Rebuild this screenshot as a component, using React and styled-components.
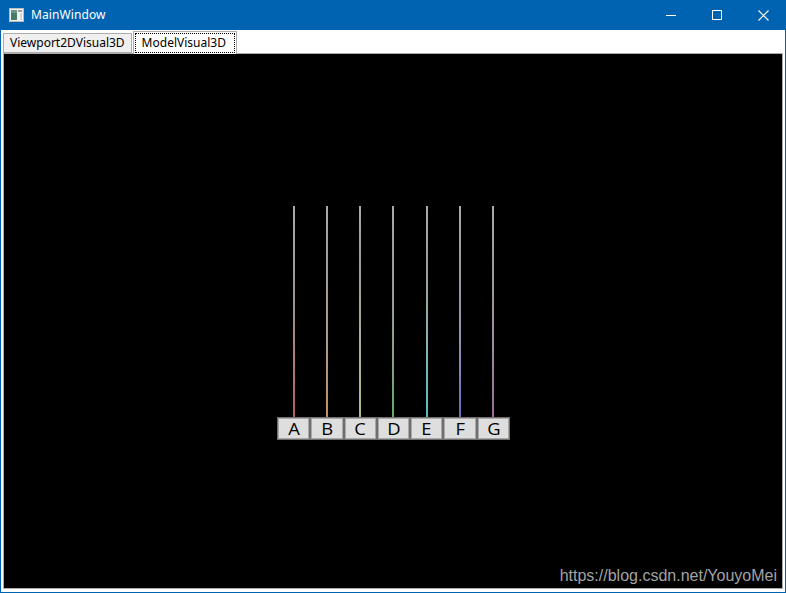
import React from "react";
import styled, { createGlobalStyle } from "styled-components";

const GlobalStyle = createGlobalStyle`
  html, body { margin: 0; padding: 0; background: #ffffff; overflow: hidden; }
  * { box-sizing: border-box; }
`;

const Window = styled.div`
  width: 786px;
  height: 593px;
  display: flex;
  flex-direction: column;
  background: #ffffff;
  border: 1px solid #0063b1;
  border-top: none;
  font-family: "Noto Sans", "Liberation Sans", sans-serif;
`;

const TitleBar = styled.div`
  height: 30px;
  flex: 0 0 30px;
  background: #0063b1;
  display: flex;
  align-items: center;
  color: #ffffff;
  margin: 0 -1px;
`;

const AppIcon = styled.svg`
  width: 15px;
  height: 14px;
  margin-left: 9px;
  margin-right: 7px;
  flex: 0 0 auto;
`;

const Title = styled.div`
  font-size: 12px;
  flex: 1;
  line-height: 30px;
  letter-spacing: 0.1px;
`;

const CaptionButton = styled.div`
  width: 46px;
  height: 30px;
  display: flex;
  align-items: center;
  justify-content: center;
`;

const TabStrip = styled.div`
  height: 23px;
  flex: 0 0 23px;
  display: flex;
  align-items: flex-end;
  padding-left: 2px;
  position: relative;
  z-index: 1;
`;

const Tab = styled.div`
  height: ${(p) => (p.$selected ? "23px" : "20px")};
  margin-bottom: ${(p) => (p.$selected ? "-1px" : "0")};
  margin-left: ${(p) => (p.$selected ? "1px" : "0")};
  padding: ${(p) => (p.$selected ? "1px" : "0")};
  border: 1px solid #acacac;
  border-bottom: ${(p) => (p.$selected ? "none" : "1px solid #acacac")};
  background: ${(p) => (p.$selected ? "#ffffff" : "#f0f0f0")};
  font-size: 12px;
  color: #000000;
  display: flex;
`;

const TabLabel = styled.div`
  display: flex;
  align-items: center;
  padding: ${(p) => (p.$selected ? "0 8px 1px 6px" : "0 5px 1px 5px")};
  border: 1px ${(p) => (p.$selected ? "dotted #000000" : "solid transparent")};
  line-height: 16px;
  white-space: nowrap;
`;

const Panel = styled.div`
  flex: 1;
  margin: 0 2px 3px 2px;
  border: 1px solid #acacac;
  background: #000000;
  position: relative;
  display: flex;
  align-items: center;
  justify-content: center;
  padding-top: 4px;
`;

const Scene = styled.div`
  width: 233px;
  display: flex;
  flex-direction: column;
  margin-left: 1px;
`;

const StringsRow = styled.div`
  height: 211px;
  display: flex;
`;

const StringCell = styled.div`
  flex: 1;
  display: flex;
  justify-content: center;
`;

const Wire = styled.div`
  width: 2px;
  height: 100%;
  opacity: 0.85;
  background: linear-gradient(
    to bottom,
    #c8c8c8 0%,
    #b8b8b8 25%,
    ${(p) => p.$mid} 65%,
    ${(p) => p.$color} 100%
  );
`;

const KeysRow = styled.div`
  height: 23px;
  display: flex;
`;

const Key = styled.div`
  flex: 1;
  background: #dedede;
  border: 1px solid #6f6f6f;
  box-shadow: inset 0 0 0 1px #a8a8a8;
  display: flex;
  align-items: center;
  justify-content: center;
  font-family: "Open Sans", "Noto Sans", sans-serif;
  font-size: 16px;
  color: #000000;
  line-height: 1;
  padding-top: 1px;
`;

const KeyLetter = styled.span`
  display: inline-block;
  transform: scaleX(1.15);
`;

const Watermark = styled.div`
  position: absolute;
  right: 5px;
  bottom: 4px;
  font-family: "Liberation Sans", Arial, sans-serif;
  font-size: 16px;
  line-height: 1;
  color: #a3a3a3;
`;

const keys = [
  { l: "A", c: "#d86a6a", m: "#c79a9a" },
  { l: "B", c: "#e0a878", m: "#cdb49e" },
  { l: "C", c: "#d6d69a", m: "#cacab0" },
  { l: "D", c: "#7cc47c", m: "#a8bca8" },
  { l: "E", c: "#5ee0e0", m: "#a0d0d0" },
  { l: "F", c: "#7c7ce0", m: "#aaaad2" },
  { l: "G", c: "#b67cb6", m: "#bca6bc" },
];

export default function App() {
  return (
    <>
      <GlobalStyle />
      <Window>
        <TitleBar>
          <AppIcon viewBox="0 0 15 14">
            <rect x="0.5" y="0.5" width="14" height="13" fill="#f2f2f2" stroke="#bdbdbd" />
            <rect x="2" y="2" width="6" height="10" fill="#4a7a68" />
            <rect x="2" y="2" width="6" height="3" fill="#6f9585" />
            <rect x="9" y="2" width="4" height="2" fill="#9a9a9a" />
            <rect x="11" y="5" width="2" height="7" fill="#d6d6d6" />
          </AppIcon>
          <Title>MainWindow</Title>
          <CaptionButton>
            <svg width="10" height="10" viewBox="0 0 10 10">
              <rect x="0" y="5" width="10" height="1" fill="#ffffff" />
            </svg>
          </CaptionButton>
          <CaptionButton>
            <svg width="10" height="10" viewBox="0 0 10 10">
              <rect x="0.5" y="0.5" width="9" height="9" fill="none" stroke="#ffffff" />
            </svg>
          </CaptionButton>
          <CaptionButton>
            <svg width="11" height="11" viewBox="0 0 11 11">
              <path d="M0.5 0.5 L10.5 10.5 M10.5 0.5 L0.5 10.5" stroke="#ffffff" strokeWidth="1.1" />
            </svg>
          </CaptionButton>
        </TitleBar>
        <TabStrip>
          <Tab>
            <TabLabel>Viewport2DVisual3D</TabLabel>
          </Tab>
          <Tab $selected>
            <TabLabel $selected>ModelVisual3D</TabLabel>
          </Tab>
        </TabStrip>
        <Panel>
          <Scene>
            <StringsRow>
              {keys.map((k) => (
                <StringCell key={k.l}>
                  <Wire $color={k.c} $mid={k.m} />
                </StringCell>
              ))}
            </StringsRow>
            <KeysRow>
              {keys.map((k) => (
                <Key key={k.l}>
                  <KeyLetter>{k.l}</KeyLetter>
                </Key>
              ))}
            </KeysRow>
          </Scene>
          <Watermark>https://blog.csdn.net/YouyoMei</Watermark>
        </Panel>
      </Window>
    </>
  );
}
